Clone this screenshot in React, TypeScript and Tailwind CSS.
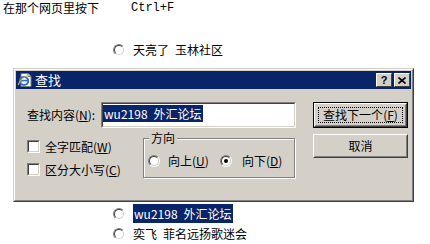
import React from 'react';

const sunkenOuter = 'border border-t-[#808080] border-l-[#808080] border-b-white border-r-white';
const sunkenInner = 'border border-t-[#404040] border-l-[#404040] border-b-[#d4d0c8] border-r-[#d4d0c8]';

function Radio({ checked }: { checked?: boolean }) {
  return (
    <span className={`flex w-[12px] h-[12px] shrink-0 rounded-full ${sunkenOuter}`}>
      <span className={`flex w-full h-full items-center justify-center rounded-full bg-white ${sunkenInner}`}>
        {checked && <span className="w-[4px] h-[4px] rounded-full bg-black" />}
      </span>
    </span>
  );
}

function Checkbox() {
  return (
    <span className={`flex w-[13px] h-[13px] shrink-0 ${sunkenOuter}`}>
      <span className={`block w-full h-full bg-white ${sunkenInner}`} />
    </span>
  );
}

function Key({ k }: { k: string }) {
  return (
    <>
      (<span className="underline underline-offset-[1px]">{k}</span>)
    </>
  );
}

function Button({ children, isDefault }: { children: React.ReactNode; isDefault?: boolean }) {
  if (isDefault) {
    return (
      <div className="h-[26px] border border-black">
        <div className="h-full border border-t-white border-l-white border-b-[#404040] border-r-[#404040]">
          <div className="h-full border border-t-[#d4d0c8] border-l-[#d4d0c8] border-b-[#808080] border-r-[#808080] p-[2px]">
            <div className="h-full border border-dotted border-black flex items-center justify-center">{children}</div>
          </div>
        </div>
      </div>
    );
  }
  return (
    <div className="h-[24px] border border-t-white border-l-white border-b-[#404040] border-r-[#404040]">
      <div className="h-full border border-t-[#d4d0c8] border-l-[#d4d0c8] border-b-[#808080] border-r-[#808080] flex items-center justify-center">
        {children}
      </div>
    </div>
  );
}

function CaptionButton({ children }: { children: React.ReactNode }) {
  return (
    <div className="w-[16px] h-[14px] bg-[#d4d0c8] border border-t-white border-l-white border-b-[#404040] border-r-[#404040] flex items-center justify-center">
      {children}
    </div>
  );
}

function FindIcon() {
  return (
    <svg width="16" height="16" viewBox="0 0 16 16">
      <path d="M4 1.5h7l3 3v10H4z" fill="#fff" stroke="#7a7a7a" strokeWidth="1" />
      <path d="M11 1.5v3h3" fill="#e0e0e0" stroke="#7a7a7a" strokeWidth="1" />
      <ellipse cx="7" cy="9" rx="4.2" ry="4" fill="none" stroke="#2b6fd6" strokeWidth="2" />
      <path d="M3.5 8.6h7" stroke="#2b6fd6" strokeWidth="1.6" />
      <path d="M1 13c2-5 7-9 12-10" fill="none" stroke="#f0b020" strokeWidth="1.2" />
    </svg>
  );
}

export default function App() {
  return (
    <div className="w-[430px] h-[244px] bg-white overflow-hidden text-black text-[12px] leading-[14px] font-['Noto_Sans_CJK_SC',sans-serif]">
      {/* instruction line */}
      <div className="flex pt-[1px] pl-[3px] h-[16px]">
        <span>在那个网页里按下</span>
        <span className="ml-[32px] font-['Liberation_Mono',monospace] text-[12px]">Ctrl+F</span>
      </div>

      <div className="flex items-center gap-[8px] pl-[113px] mt-[27px] h-[14px]">
        <Radio />
        <span>天亮了{'\u2002'}玉林社区</span>
      </div>

      {/* find dialog */}
      <div className="ml-[13px] mt-[11px] w-[401px] h-[134px] border border-t-[#d4d0c8] border-l-[#d4d0c8] border-b-[#404040] border-r-[#404040]">
        <div className="h-full border border-t-white border-l-white border-b-[#808080] border-r-[#808080] bg-[#d4d0c8] p-[1px] flex flex-col">
          <div className="h-[18px] bg-[#0a246a] flex items-center pl-[1px] pr-[1px]">
            <FindIcon />
            <span className="ml-[2px] text-white text-[13px] leading-[16px]">查找</span>
            <div className="ml-auto flex gap-[2px]">
              <CaptionButton>
                <span className="font-['Liberation_Sans',sans-serif] font-bold text-[11px] leading-[11px]">?</span>
              </CaptionButton>
              <CaptionButton>
                <svg width="8" height="7" viewBox="0 0 8 7">
                  <path d="M0.5 0.5l7 6M7.5 0.5l-7 6" stroke="#000" strokeWidth="1.6" />
                </svg>
              </CaptionButton>
            </div>
          </div>

          <div className="flex pt-[13px] pl-[11px] pr-[1px]">
            <div className="w-[269px] flex flex-col">
              <div className="flex items-center h-[26px]">
                <span className="w-[74px] whitespace-nowrap">
                  查找内容<Key k="N" />:
                </span>
                <div className={`w-[195px] h-[26px] ${sunkenOuter}`}>
                  <div className={`w-full h-full bg-white pt-[1px] ${sunkenInner}`}>
                    <span className="inline-flex items-center h-[17px] px-[1px] bg-[#0a246a] text-white">wu2198{'\u2002'}外汇论坛</span>
                  </div>
                </div>
              </div>

              <div className="flex mt-[2px]">
                <div className="w-[116px] flex flex-col gap-[10px] pt-[10px]">
                  <div className="flex items-center gap-[5px] h-[13px]">
                    <Checkbox />
                    <span className="whitespace-nowrap">
                      全字匹配<Key k="W" />
                    </span>
                  </div>
                  <div className="flex items-center gap-[5px] h-[13px]">
                    <Checkbox />
                    <span className="whitespace-nowrap">
                      区分大小写<Key k="C" />
                    </span>
                  </div>
                </div>

                <div className="relative mt-[8px] w-[152px] h-[40px] border border-[#808080] shadow-[inset_1px_1px_0_#fff,1px_1px_0_#fff]">
                  <span className="absolute -top-[8px] left-[5px] px-[2px] bg-[#d4d0c8]">方向</span>
                  <div className="flex items-center pt-[15px] pl-[4px] h-[28px]">
                    <div className="w-[72px] flex items-center gap-[8px]">
                      <Radio />
                      <span className="whitespace-nowrap">
                        向上<Key k="U" />
                      </span>
                    </div>
                    <div className="flex items-center gap-[10px]">
                      <Radio checked />
                      <span className="whitespace-nowrap">
                        向下<Key k="D" />
                      </span>
                    </div>
                  </div>
                </div>
              </div>
            </div>

            <div className="ml-[17px] w-[95px] flex flex-col gap-[6px]">
              <Button isDefault>
                <span className="whitespace-nowrap">
                  查找下一个<Key k="F" />
                </span>
              </Button>
              <Button>取消</Button>
            </div>
          </div>
        </div>
      </div>

      <div className="flex items-center gap-[8px] pl-[113px] mt-[2px] h-[19px]">
        <Radio />
        <span className="flex items-center h-full px-[1px] bg-[#0a246a] text-white">wu2198{'\u2002'}外汇论坛</span>
      </div>

      <div className="flex items-center gap-[8px] pl-[113px] mt-[3px] h-[16px]">
        <Radio />
        <span>奕飞{'\u2002'}菲名远扬歌迷会</span>
      </div>
    </div>
  );
}
